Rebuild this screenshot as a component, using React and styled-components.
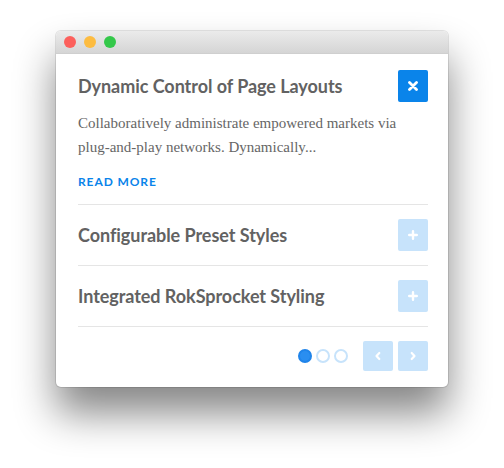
import React, { useState } from 'react';
import styled, { createGlobalStyle, css } from 'styled-components';

const items = [
    {
        title: 'Dynamic Control of Page Layouts',
        text: 'Collaboratively administrate empowered markets via plug-and-play networks. Dynamically...',
    },
    { title: 'Configurable Preset Styles', text: '' },
    { title: 'Integrated RokSprocket Styling', text: '' },
];

const GlobalStyle = createGlobalStyle`
    html, body {
        margin: 0;
        background: #fff;
        font-family: Lato, "Open Sans", sans-serif;
    }
`;

const Page = styled.div`
    box-sizing: border-box;
    min-height: 468px;
    padding: 31px 0 0 56px;
`;

const Window = styled.div`
    width: 392px;
    border-radius: 5px;
    overflow: hidden;
    background: #fff;
    box-shadow: 0 0 0 1px rgba(0, 0, 0, 0.1), 0 26px 40px rgba(0, 0, 0, 0.48);
`;

const TitleBar = styled.div`
    display: flex;
    align-items: center;
    gap: 8px;
    height: 22px;
    padding-left: 8px;
    background: linear-gradient(#ebebeb, #d5d5d5);
    border-bottom: 1px solid #cfcfcf;
`;

const Light = styled.span`
    width: 12px;
    height: 12px;
    border-radius: 50%;
    background: ${ (p) => p.color };
`;

const Content = styled.div`
    padding: 16px 20px 16px 22px;
`;

const Item = styled.div`
    padding: ${ (p) => (p.first ? '0 0 14px' : '14px 0') };
    border-bottom: 1px solid #e5e5e5;
`;

const ItemHeader = styled.div`
    display: flex;
    align-items: center;
    justify-content: space-between;
`;

const Title = styled.h3`
    margin: 0;
    font-size: 18px;
    font-weight: 700;
    color: #626262;
    letter-spacing: -0.05px;
`;

const Button = styled.button`
    display: flex;
    align-items: center;
    justify-content: center;
    width: 30px;
    height: ${ (p) => p.h || 32 }px;
    padding: 0;
    border: none;
    border-radius: 2px;
    background: #c7e3fb;
    cursor: pointer;
    ${ (p) => p.active && css`
        background: #0a84ea;
    ` }
`;

const Body = styled.p`
    margin: 9px 0 0;
    font-family: "Liberation Serif", serif;
    font-size: 15px;
    line-height: 24px;
    color: #666;
`;

const ReadMore = styled.a`
    display: block;
    margin-top: 15px;
    font-size: 12px;
    line-height: 16px;
    font-weight: 700;
    letter-spacing: 0.9px;
    color: #0a84ea;
    text-decoration: none;
`;

const Footer = styled.div`
    display: flex;
    align-items: center;
    justify-content: flex-end;
    padding-top: 14px;
`;

const Dots = styled.div`
    display: flex;
    gap: 4px;
    margin-right: 15px;
`;

const Dot = styled.span`
    box-sizing: border-box;
    width: 14px;
    height: 14px;
    border-radius: 50%;
    border: 2px solid #c7e3fb;
    ${ (p) => p.active && css`
        background: #2a8ef0;
        border-color: #1f84ea;
    ` }
`;

const Nav = styled.div`
    display: flex;
    gap: 5px;
`;

const CloseIcon = () => (
    <svg width="10" height="10" viewBox="0 0 10 10">
        <path d="M1.5 1.5 L8.5 8.5 M8.5 1.5 L1.5 8.5" stroke="#fff" strokeWidth="2.8" strokeLinecap="round" />
    </svg>
);

const PlusIcon = () => (
    <svg width="10" height="10" viewBox="0 0 10 10">
        <path d="M5 1.2 V8.8 M1.2 5 H8.8" stroke="#fff" strokeWidth="2.4" strokeLinecap="round" />
    </svg>
);

const Chevron = ({ dir }) => (
    <svg width="8" height="10" viewBox="0 0 8 10">
        <path
            d={dir === 'left' ? 'M5.3 2 L2.5 5 L5.3 8' : 'M2.7 2 L5.5 5 L2.7 8'}
            stroke="#fff"
            strokeWidth="2.2"
            fill="none"
            strokeLinecap="round"
            strokeLinejoin="round"
        />
    </svg>
);

const App = () => {
    const [ open, setOpen ] = useState(0);

    return (
        <Page>
            <GlobalStyle />
            <Window>
                <TitleBar>
                    <Light color="#fc605c" />
                    <Light color="#fdbc40" />
                    <Light color="#34c84a" />
                </TitleBar>
                <Content>
                    {items.map((item, i) => (
                        <Item key={item.title} first={i === 0}>
                            <ItemHeader>
                                <Title>{item.title}</Title>
                                <Button active={open === i} onClick={() => setOpen(open === i ? -1 : i)}>
                                    {open === i ? <CloseIcon /> : <PlusIcon />}
                                </Button>
                            </ItemHeader>
                            {open === i && item.text && (
                                <>
                                    <Body>{item.text}</Body>
                                    <ReadMore href="#">READ MORE</ReadMore>
                                </>
                            )}
                        </Item>
                    ))}
                    <Footer>
                        <Dots>
                            <Dot active />
                            <Dot />
                            <Dot />
                        </Dots>
                        <Nav>
                            <Button h={30}><Chevron dir="left" /></Button>
                            <Button h={30}><Chevron dir="right" /></Button>
                        </Nav>
                    </Footer>
                </Content>
            </Window>
        </Page>
    );
};

export default App;
